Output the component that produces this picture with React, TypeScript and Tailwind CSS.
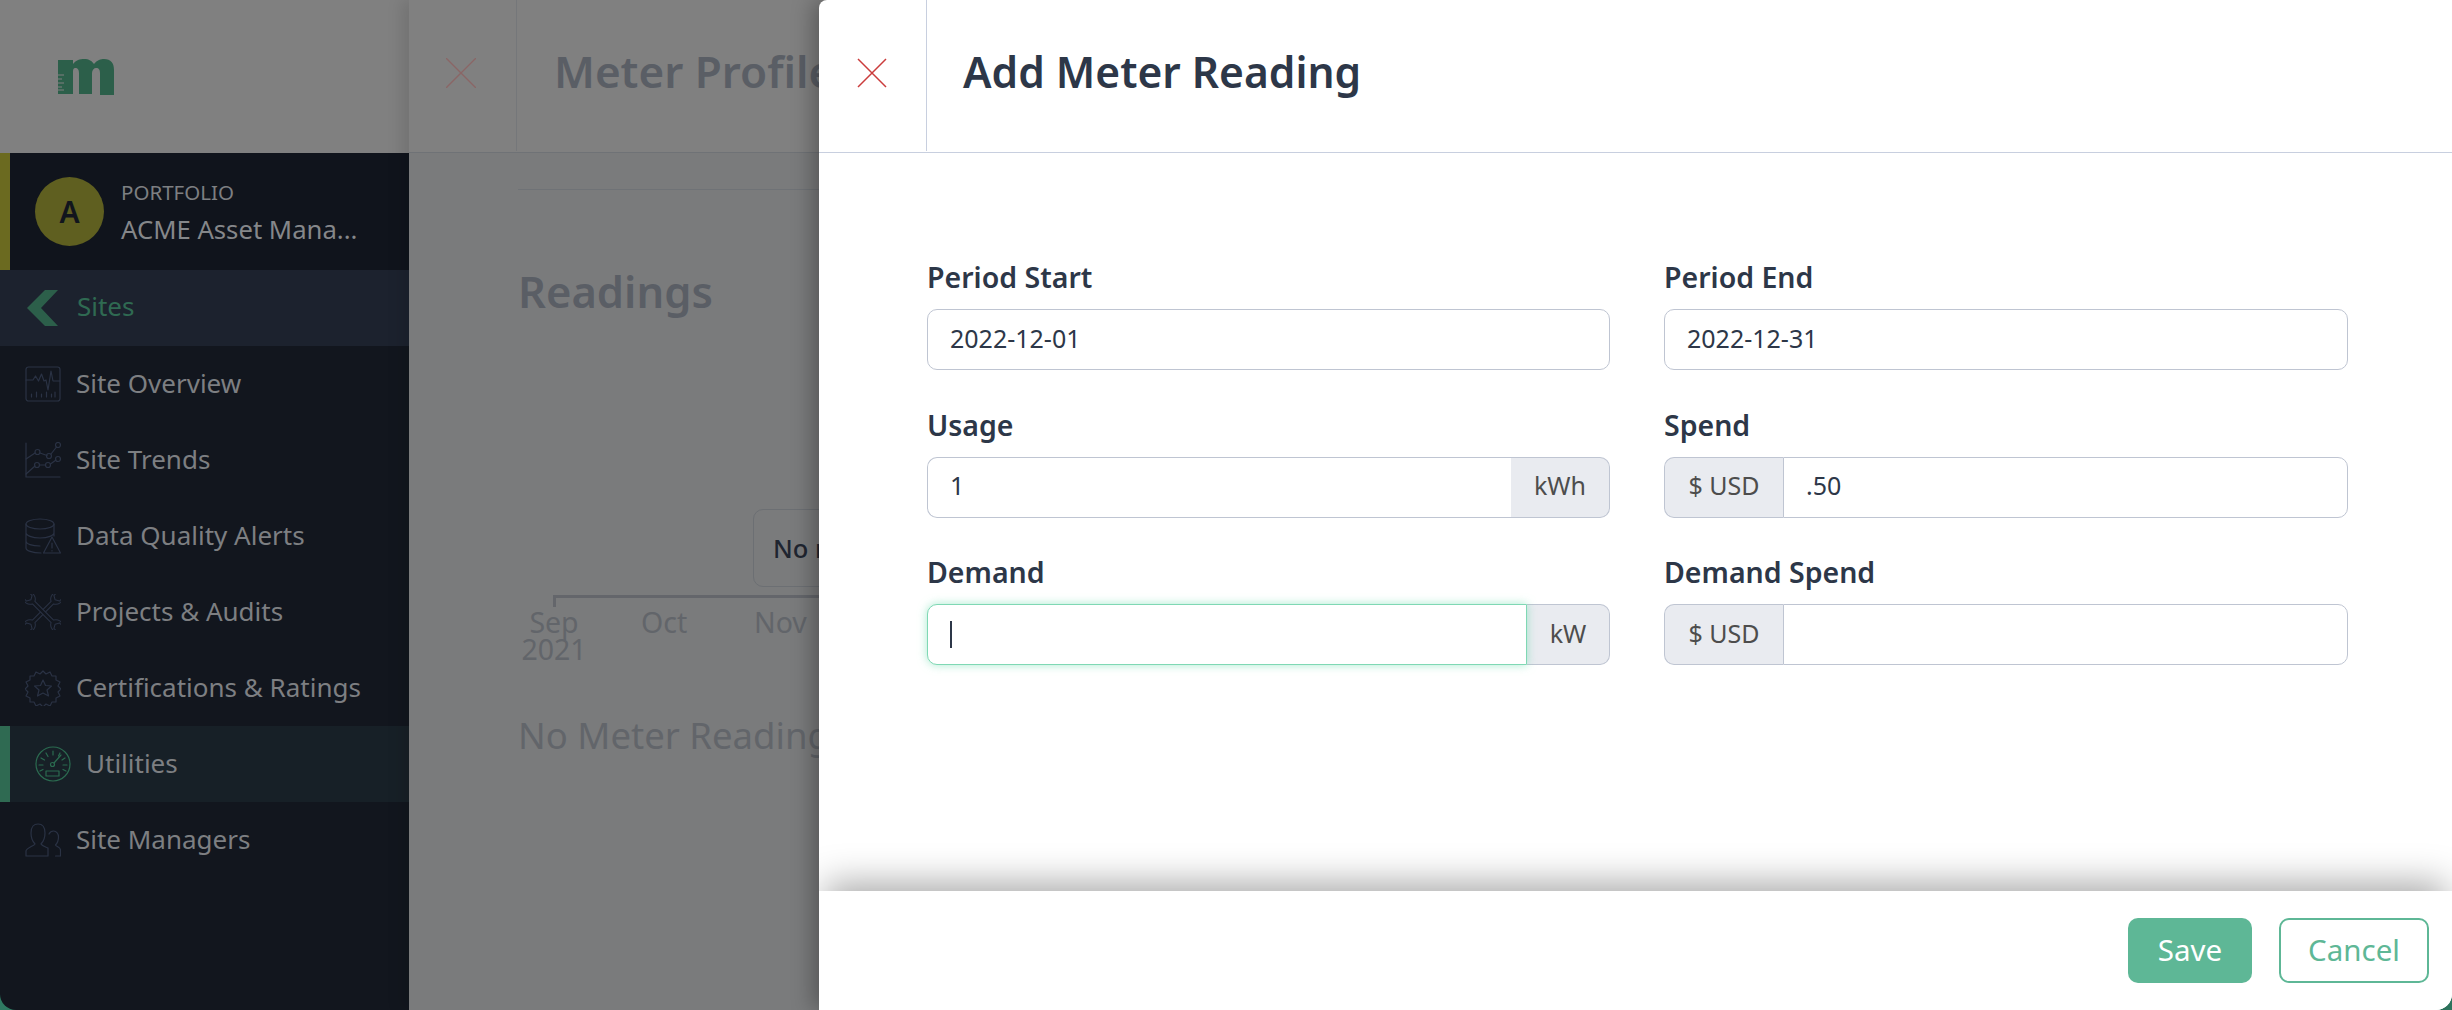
import React from "react";

const S = "#2a3244";
const Ico = ({ children, color = S }: { children: React.ReactNode; color?: string }) => (
  <svg width="36" height="36" viewBox="0 0 36 36" fill="none" stroke={color} strokeWidth="1.2" strokeLinecap="round" strokeLinejoin="round" className="shrink-0">
    {children}
  </svg>
);

const WRENCH =
  "M13.500 -9.500 A8 8 0 0 0 16 3 L16 33 A8 8 0 0 0 13.500 45.500 L13.500 40 L18 37.500 L22.500 40 L22.500 45.500 A8 8 0 0 0 20 33 L20 3 A8 8 0 0 0 22.500 -9.500 L22.500 -4 L18 -1.500 L13.500 -4 Z";

const Overview = () => (
  <Ico>
    <rect x="1" y="1" width="34" height="34" rx="2.5" />
    <path d="M1 14h7l2.500-4 3 5 3-7 2.500 7 2-1 2 10 3-19 2 10h7" />
    <path d="M6.500 31v-3M11.500 31v-5M16.500 31v-3M21.500 31v-5M26.500 31v-3M30 31v-5" />
  </Ico>
);
const Trends = () => (
  <Ico>
    <path d="M1 1v34h34" />
    <circle cx="12.500" cy="10" r="2.500" />
    <circle cx="24" cy="14" r="2.500" />
    <circle cx="33" cy="3" r="2.500" />
    <circle cx="12" cy="23" r="2.500" />
    <circle cx="23" cy="23" r="2.500" />
    <circle cx="33" cy="17" r="2.500" />
    <path d="M1 17l9-6M15 11l7 2.500M26 12l5.500-7M1 32l9-8M14.500 23h6M25.500 22l5.500-4" />
  </Ico>
);
const Data = () => (
  <Ico>
    <ellipse cx="15" cy="6" rx="14" ry="5" />
    <path d="M1 6v24c0 2.500 6 5 15 5M29 6v12M1 14.500c0 3 6 5.500 14 5.500s14-2.500 14-5.500M1 23c0 3 6 5 14 5" />
    <path d="M27 19l8.500 16h-17z" fill="#12161e" />
    <path d="M27 25v5M27 32.500v.5" />
  </Ico>
);
const Tools = () => (
  <Ico>
    <g transform="translate(18 18) scale(0.88) translate(-18 -18)">
      <path d={WRENCH} transform="rotate(45 18 18)" fill="#12161e" />
      <path d={WRENCH} transform="rotate(-45 18 18)" fill="#12161e" />
    </g>
  </Ico>
);
const Badge = () => (
  <Ico>
    <path d="M18 1l3 3 4-2 2 4 4 0 0 4 4 2-2 4 3 3-3 3 2 4-4 2 0 4-4 0-2 4-4-2-3 3-3-3-4 2-2-4-4 0 0-4-4-2 2-4-3-3 3-3-2-4 4-2 0-4 4 0 2-4 4 2z" />
    <path d="M18 10l2.500 5.500 6 .5-4.500 4 1.500 6-5.500-3-5.500 3 1.500-6-4.500-4 6-.5z" />
  </Ico>
);
const Gauge = () => (
  <Ico color="#2b6b50">
    <circle cx="18" cy="18" r="17" />
    <path d="M18 5v4M11 7l2 3.500M25 7l-1.500 3M6 12l3.500 2M4 19h4M5 25l3-1.500M30 12l-3 2M32 19h-4M31 25l-3-1.500" />
    <circle cx="17.500" cy="18.500" r="2" />
    <path d="M19 17l7-8" />
    <rect x="11" y="25" width="13" height="5" />
  </Ico>
);
const Users = () => (
  <Ico>
    <path d="M1 34v-5c0-3 8-5 9-7-3-3-4-6-4-11 0-6 3-9 7-9s7 3 7 9c0 5-1 8-4 11 1 2 5 3 7 4v8z" />
    <path d="M24 12c1-2 3-3 4.500-3 3 0 5 3 5 6 0 3-1 6-3 8 1 2 5 2 5 5v6h-5" />
  </Ico>
);

const Item = ({ icon, label }: { icon: React.ReactNode; label: string }) => (
  <div className="flex h-[76px] items-center pl-[25px] gap-[15px] text-[26px] text-[#7d7f82]">
    {icon}
    <span className="mb-[2px]">{label}</span>
  </div>
);

const Sidebar = () => (
  <aside className="flex h-full w-[409px] shrink-0 flex-col rounded-bl-[16px] bg-[#12161e]">
    <div className="flex h-[153px] items-start bg-[#808080] pl-[58px] pt-[59px]">
      <svg width="56" height="36" viewBox="0 0 56 36">
        <path d="M0 1h15v4c3-4 7-5 11-5 5 0 8 2 10 5 3-4 7-5 10-5 7 0 10 4 10 11v25H42V14c0-3-1-5-4-5-2 0-4 2-4 5v21H21V14c0-3-1-5-4-5-1 0-2 1-2 3v23H0z" fill="#2c5f4a" />
        <path d="M0 16h6M0 20h4M0 24h6M0 28h4M0 31h6" stroke="#808080" strokeWidth="1.200" />
      </svg>
    </div>
    <div className="flex h-[117px] items-center border-l-[10px] border-[#6b6a20] bg-[#10141c] pl-[25px]">
      <div className="flex h-[69px] w-[69px] shrink-0 items-center justify-center rounded-full bg-[#5f5f20] text-[30px] font-semibold text-[#11151d]">A</div>
      <div className="ml-[17px] flex flex-col">
        <span className="text-[20.500px] leading-[30px] text-[#7d7f82]">PORTFOLIO</span>
        <span className="mt-[6px] text-[25.700px] leading-[34px] text-[#85878a]">ACME Asset Mana...</span>
      </div>
    </div>
    <div className="flex h-[76px] items-center bg-[#1c222e] pl-[27px] text-[26px] text-[#2f6a52]">
      <svg width="32" height="36" viewBox="0 0 32 36" className="shrink-0">
        <path d="M18 0h13L14 18l17 18H18L0 18z" fill="#2c5f4a" />
      </svg>
      <span className="mb-[3px] ml-[18px]">Sites</span>
    </div>
    <Item icon={<Overview />} label="Site Overview" />
    <Item icon={<Trends />} label="Site Trends" />
    <Item icon={<Data />} label="Data Quality Alerts" />
    <Item icon={<Tools />} label="Projects & Audits" />
    <Item icon={<Badge />} label="Certifications & Ratings" />
    <div className="flex h-[76px] items-center gap-[15px] border-l-[10px] border-[#2f6a52] bg-[#172027] pl-[25px] text-[26px] text-[#7d7f82]">
      <Gauge />
      <span className="mb-[2px]">Utilities</span>
    </div>
    <Item icon={<Users />} label="Site Managers" />
  </aside>
);

const Sheet = () => (
  <div className="relative flex h-full w-[460px] shrink-0 flex-col overflow-hidden bg-[#7a7b7c] text-[#5a5e65] shadow-[-8px_0_14px_rgba(0,0,0,0.1)]">
    <div className="flex h-[153px] shrink-0 items-stretch border-b border-[#6f7276] bg-[#808080] pb-[1px]">
      <div className="flex w-[108px] items-center justify-center border-r border-[#75777a]">
        <svg width="30" height="30" viewBox="0 0 30 30" stroke="#8a6666" strokeWidth="1.400" className="mb-[5px] mr-[3px]">
          <path d="M0 0l30 30M30 0L0 30" />
        </svg>
      </div>
      <h2 className="ml-[37px] mt-[41px] whitespace-nowrap text-[44px] leading-[60px] font-semibold">Meter Profile</h2>
    </div>
    <div className="ml-[109px] mt-[36px] h-px w-[400px] shrink-0 bg-[#6f7276]" />
    <h3 className="ml-[109px] mt-[73px] text-[43.500px] leading-[56px] font-semibold">Readings</h3>
    <div className="relative ml-[109px] mt-[190px] h-[90px] shrink-0">
      <div className="absolute left-[235px] top-0 flex h-[78px] w-[200px] items-center rounded-[10px] border border-[#6c6f73] pl-[19px] text-[25.500px] font-medium text-[#1f2530]">No results</div>
      <div className="absolute left-[35px] top-[86px] h-[12px] w-[400px] border-l-[3px] border-t-[3px] border-[#64666b]" />
    </div>
    <div className="relative ml-[109px] h-[60px] shrink-0 text-[28.500px] leading-[27px] text-[#62656a]">
      <span className="absolute left-[-4px] top-[10px] w-[80px] text-center">Sep<br />2021</span>
      <span className="absolute left-[123px] top-[10px]">Oct</span>
      <span className="absolute left-[236px] top-[10px]">Nov</span>
    </div>
    <div className="ml-[109px] mt-[53px] whitespace-nowrap text-[36.500px] leading-[46px] text-[#62656a]">No Meter Readings</div>
  </div>
);

const Field = ({
  label,
  value,
  prefix,
  suffix,
  suffixW,
  focus,
}: {
  label: string;
  value?: string;
  prefix?: string;
  suffix?: string;
  suffixW?: string;
  focus?: boolean;
}) => (
  <div className="flex flex-col">
    <label className="mb-[14px] h-[34px] text-[28.500px] leading-[32px] font-semibold text-[#2d3748]">{label}</label>
    <div className="flex h-[61px] w-full rounded-[10px] text-[25px] text-[#2d3748]">
      {prefix && (
        <div className="flex w-[119px] shrink-0 items-center justify-center rounded-l-[10px] border border-r-0 border-[#bfc5d2] bg-[#e9ebf0] pb-[2px] text-[#4d4d4d]">{prefix}</div>
      )}
      <div
        className={
          focus
            ? "relative z-10 flex flex-1 items-center rounded-l-[10px] border border-[#7fd8b4] bg-white pl-[22px] shadow-[0_0_10px_rgba(110,220,175,0.6)]"
            : `flex flex-1 items-center border border-[#bfc5d2] bg-white pb-[2px] pl-[22px] ${prefix ? "rounded-r-[10px]" : suffix ? "rounded-l-[10px] border-r-0" : "rounded-[10px]"}`
        }
      >
        {focus ? <span className="h-[27px] w-[2px] bg-[#2d3748]" /> : value}
      </div>
      {suffix && (
        <div className={`flex shrink-0 items-center justify-center rounded-r-[10px] border border-l-0 border-[#bfc5d2] bg-[#e9ebf0] pb-[2px] text-[#4d4d4d] ${suffixW}`}>{suffix}</div>
      )}
    </div>
  </div>
);

const Modal = () => (
  <div className="absolute bottom-0 left-[819px] right-0 top-0 flex flex-col overflow-hidden rounded-tl-[8px] rounded-br-[16px] bg-white shadow-[-6px_0_22px_rgba(0,0,0,0.3)]">
    <div className="flex h-[153px] shrink-0 border-b border-[#c8cfdf]">
      <div className="flex h-[151px] w-[108px] items-center justify-center border-r border-[#c8cfdf]">
        <svg width="30" height="30" viewBox="0 0 30 30" stroke="#cb3c3c" strokeWidth="1.500" className="mb-[5px] mr-[2px]">
          <path d="M1 1l28 28M29 1L1 29" />
        </svg>
      </div>
      <h1 className="ml-[36px] mt-[42px] text-[42.500px] leading-[60px] font-semibold text-[#2d3748]">Add Meter Reading</h1>
    </div>
    <div className="flex-1 overflow-hidden pl-[108px] pr-[103px] pt-[108px]">
      <div className="grid grid-cols-[683px_684px] gap-x-[54px] gap-y-[38.500px]">
        <Field label="Period Start" value="2022-12-01" />
        <Field label="Period End" value="2022-12-31" />
        <Field label="Usage" value="1" suffix="kWh" suffixW="w-[99px]" />
        <Field label="Spend" value=".50" prefix="$ USD" />
        <Field label="Demand" focus suffix="kW" suffixW="w-[83px]" />
        <Field label="Demand Spend" prefix="$ USD" />
      </div>
    </div>
    <div className="relative z-10 flex h-[119px] shrink-0 items-start justify-end gap-[27px] bg-white pr-[23px] pt-[27px] text-[29.500px] shadow-[0_-14px_36px_-6px_rgba(0,0,0,0.34)]">
      <button className="h-[65px] w-[124px] rounded-[10px] bg-[#5eb796] text-white">Save</button>
      <button className="h-[65px] w-[150px] rounded-[10px] border-2 border-[#5eb796] bg-white text-[#5eb796]">Cancel</button>
    </div>
  </div>
);

export default function App() {
  return (
    <div
      className="relative flex h-[1010px] w-[2452px] overflow-hidden bg-[#2f7a62]"
      style={{ fontFamily: '"Noto Sans", "Open Sans", sans-serif' }}
    >
      <Sidebar />
      <Sheet />
      <Modal />
    </div>
  );
}
